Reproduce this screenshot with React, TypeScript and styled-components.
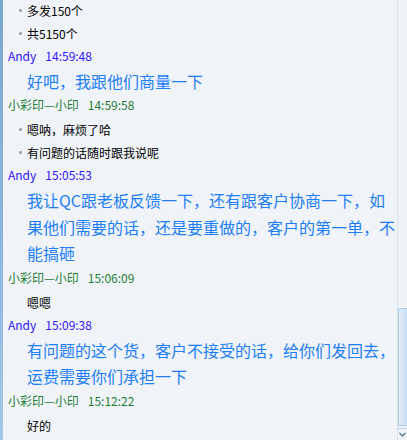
import React from "react";
import styled, { createGlobalStyle } from "styled-components";

const Global = createGlobalStyle`
  html, body { margin: 0; padding: 0; }
  body {
    width: 407px;
    height: 440px;
    overflow: hidden;
    background: #f0f4f8;
    font-family: "Noto Sans CJK SC", "Noto Sans", sans-serif;
  }
`;

const Frame = styled.div`
  display: flex;
  width: 407px;
  height: 440px;
  background: #f0f4f8;
  overflow: hidden;
`;

const EdgeStrip = styled.div`
  width: 3px;
  flex: none;
  background: linear-gradient(180deg, #78a6d4 0%, #8db7df 60%, #a4c7e7 100%);
`;

const Chat = styled.div`
  flex: 1;
  min-width: 0;
  padding: 0 0 0 5px;
  margin-top: -1.5px;
  display: flex;
  flex-direction: column;
`;

const Header = styled.div<{ $who: "me" | "them" }>`
  font-size: 12px;
  line-height: 22px;
  height: 22px;
  white-space: nowrap;
  color: ${(p) => (p.$who === "me" ? "#2f14ff" : "#1f7d35")};
  display: flex;
  gap: 9px;
`;

const BigBody = styled.div`
  padding: 1px 0 0 19px;
  font-size: 16px;
  line-height: 26.5px;
  color: #1e7ef7;
`;

const SmallBody = styled.div<{ $pad: number }>`
  padding-top: ${(p) => p.$pad}px;
  display: flex;
  flex-direction: column;
`;

const SmallLine = styled.div<{ $bullet: boolean }>`
  position: relative;
  padding-left: 19px;
  font-size: 12px;
  line-height: 23px;
  height: 23px;
  color: #000;
  white-space: nowrap;
  &::before {
    content: "";
    display: ${(p) => (p.$bullet ? "block" : "none")};
    position: absolute;
    left: 11px;
    top: 10px;
    width: 3px;
    height: 3px;
    border-radius: 50%;
    background: #9a9a9a;
  }
`;

const ScrollBar = styled.div`
  width: 10px;
  flex: none;
  display: flex;
  flex-direction: column;
  background: #eef2f6;
  border-left: 1px solid #dbe3ea;
  box-sizing: border-box;
`;

const Track = styled.div`
  flex: 1;
`;

const Thumb = styled.div`
  height: 118px;
  margin-bottom: 2px;
  border: 1px solid #a8c9e8;
  border-right: none;
  border-radius: 2px 0 0 2px;
  background: linear-gradient(90deg, #e4eef8 0%, #d3e4f5 50%, #c9ddf1 100%);
  box-sizing: border-box;
`;

const ArrowButton = styled.div`
  height: 12px;
  border-top: 1px solid #c3d6e8;
  display: flex;
  align-items: center;
  justify-content: center;
  box-sizing: border-box;
`;

type Msg =
  | { who: "me" | "them"; name: string; time: string; big: string }
  | { who: "me" | "them"; name: string; time: string; lines: string[]; bullet: boolean };

const messages: Msg[] = [
  { who: "me", name: "Andy", time: "14:59:48", big: "好吧，我跟他们商量一下" },
  {
    who: "them",
    name: "小彩印—小印",
    time: "14:59:58",
    lines: ["嗯呐，麻烦了哈", "有问题的话随时跟我说呢"],
    bullet: true,
  },
  {
    who: "me",
    name: "Andy",
    time: "15:05:53",
    big: "我让QC跟老板反馈一下，还有跟客户协商一下，如果他们需要的话，还是要重做的，客户的第一单，不能搞砸",
  },
  { who: "them", name: "小彩印—小印", time: "15:06:09", lines: ["嗯嗯"], bullet: false },
  {
    who: "me",
    name: "Andy",
    time: "15:09:38",
    big: "有问题的这个货，客户不接受的话，给你们发回去，运费需要你们承担一下",
  },
  { who: "them", name: "小彩印—小印", time: "15:12:22", lines: ["好的"], bullet: false },
];

export default function App() {
  return (
    <Frame>
      <Global />
      <EdgeStrip />
      <Chat>
        <SmallBody $pad={0}>
          <SmallLine $bullet>多发150个</SmallLine>
          <SmallLine $bullet>共5150个</SmallLine>
        </SmallBody>
        {messages.map((m, i) => (
          <div key={i}>
            <Header $who={m.who}>
              <span>{m.name}</span>
              <span>{m.time}</span>
            </Header>
            {"big" in m ? (
              <BigBody>{m.big}</BigBody>
            ) : (
              <SmallBody $pad={2}>
                {m.lines.map((l, j) => (
                  <SmallLine key={j} $bullet={m.bullet}>
                    {l}
                  </SmallLine>
                ))}
              </SmallBody>
            )}
          </div>
        ))}
      </Chat>
      <ScrollBar>
        <Track />
        <Thumb />
        <ArrowButton>
          <svg width="7" height="5" viewBox="0 0 7 5">
            <path d="M0.5 1 L3.5 4 L6.5 1" fill="none" stroke="#4d6f93" strokeWidth="1.2" />
          </svg>
        </ArrowButton>
      </ScrollBar>
    </Frame>
  );
}
